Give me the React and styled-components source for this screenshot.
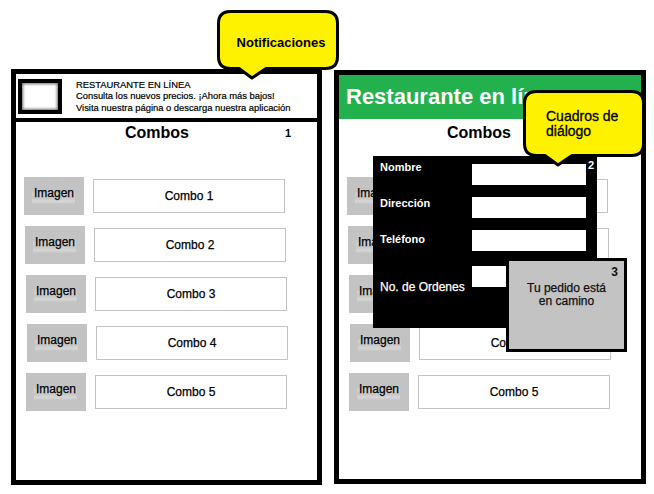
import React from "react"
import styled, { createGlobalStyle } from "styled-components"

const GlobalStyle = createGlobalStyle`
  body {
    margin: 0;
    background: #fff;
    font-family: "Liberation Sans", Arial, sans-serif;
  }
`

const Canvas = styled.div`
  position: relative;
  width: 654px;
  height: 494px;
  overflow: hidden;
  background: #fff;
`

const Screens = styled.div`
  display: flex;
  align-items: flex-start;
  gap: 12px;
  padding: 69px 0 0 11px;
`

const Phone = styled.div`
  position: relative;
  box-sizing: border-box;
  display: flex;
  flex-direction: column;
  width: ${(p) => p.$width}px;
  height: ${(p) => p.$height}px;
  margin-top: ${(p) => p.$offset || 0}px;
  border: 5px solid #000;
  background: #fff;
`

const NotifBar = styled.div`
  display: flex;
  align-items: center;
  gap: 14px;
  height: 44px;
  padding-left: 2px;
  border-bottom: 4px solid #000;
`

const Thumb = styled.div`
  box-sizing: border-box;
  width: 44px;
  height: 35px;
  border: 4px solid #000;
  background: #fff;
  box-shadow: inset 0 0 3px 1px #6a6a6a;
`

const NotifText = styled.div`
  font-size: 9.4px;
  line-height: 11.5px;
  color: #000;
  -webkit-text-stroke: 0.2px #000;
`

const GreenBar = styled.div`
  display: flex;
  align-items: center;
  height: 44px;
  padding-left: 7px;
  background: #22b14c;
  color: #fff;
  font-size: 22px;
  font-weight: bold;
  white-space: nowrap;
`

const Header = styled.div`
  position: relative;
  display: flex;
  justify-content: center;
  padding: ${(p) => p.$top || 0}px ${(p) => p.$pad}px 0 0;
  font-size: 16px;
  line-height: 22px;
  font-weight: bold;
`

const Marker = styled.span`
  position: absolute;
  top: 0;
  right: 26px;
  font-size: 11px;
  font-weight: bold;
`

const List = styled.div`
  display: flex;
  flex-direction: column;
  gap: 11px;
  padding: 33px 0 0 8px;
`

const Row = styled.div`
  display: flex;
  align-items: center;
  gap: 9px;
  height: 38px;
  margin-left: ${(p) => p.$nudge || 0}px;
`

const ImageBox = styled.div`
  display: flex;
  align-items: center;
  justify-content: center;
  width: 60px;
  height: 38px;
  padding-bottom: 6px;
  box-sizing: border-box;
  font-size: 12px;
  color: #000;
  -webkit-text-stroke: 0.25px #000;
  background:
    linear-gradient(180deg, transparent 0 38%, #d2d2d2 45%, #c6c6c6 55%, #d6d6d6 64%, transparent 72%) center / 72% 100% no-repeat,
    #c3c3c3;
`

const ComboBox = styled.div`
  box-sizing: border-box;
  display: flex;
  align-items: center;
  justify-content: center;
  width: 192px;
  height: 34px;
  border: 1px solid #c3c3c3;
  font-size: 12px;
  color: #000;
  -webkit-text-stroke: 0.25px #000;
`

const Dialog = styled.div`
  position: absolute;
  left: 34px;
  top: 81px;
  box-sizing: border-box;
  display: flex;
  flex-direction: column;
  gap: 12px;
  width: 224px;
  height: 172px;
  padding: 8px 0 0 7px;
  background: #000;
  color: #fff;
`

const Field = styled.div`
  display: flex;
  align-items: flex-start;
  height: 21px;
  margin-top: ${(p) => p.$gap || 0}px;
`

const Label = styled.span`
  width: 92px;
  margin-top: ${(p) => p.$drop}px;
  font-size: ${(p) => (p.$plain ? 12 : 11)}px;
  font-weight: ${(p) => (p.$plain ? "normal" : "bold")};
  -webkit-text-stroke: ${(p) => (p.$plain ? "0.25px #fff" : "0")};
  line-height: 14px;
  white-space: nowrap;
`

const Input = styled.div`
  width: 114px;
  height: 21px;
  background: #fff;
`

const DialogNum = styled.span`
  position: absolute;
  top: 3px;
  right: 3px;
  font-size: 11px;
  font-weight: bold;
`

const Toast = styled.div`
  position: absolute;
  left: 167px;
  top: 183px;
  box-sizing: border-box;
  width: 121px;
  height: 94px;
  border: 3px solid #000;
  background: #c3c3c3;
  color: #111;
  font-size: 12px;
  line-height: 13px;
`

const ToastNum = styled.div`
  margin-top: 5px;
  padding-right: 6px;
  text-align: right;
  font-weight: bold;
`

const ToastText = styled.div`
  margin-top: 3px;
  text-align: center;
  -webkit-text-stroke: 0.25px #111;
`

const Callout = styled.div`
  position: absolute;
  left: ${(p) => p.$x}px;
  top: ${(p) => p.$y}px;
  width: 122px;
  height: ${(p) => p.$h}px;
  box-sizing: border-box;
  padding: ${(p) => p.$pad};
  color: #000;
  font-size: ${(p) => p.$size}px;
  font-weight: ${(p) => (p.$bold ? "bold" : "normal")};
  -webkit-text-stroke: ${(p) => (p.$bold ? "0" : "0.3px #000")};
  line-height: 15px;
  text-align: ${(p) => (p.$bold ? "center" : "left")};
`

const Bubble = styled.svg`
  position: absolute;
  left: 0;
  top: 0;
  overflow: visible;
`

const CalloutText = styled.div`
  position: relative;
`

const bubblePath = (h) =>
  `M13.5,1.5 H108.5 Q120.5,1.5 120.5,13.5 V${h - 13.5} Q120.5,${h - 1.5} 108.5,${h - 1.5} H49 L35,${h + 8} L22,${h - 1.5} H13.5 Q1.5,${h - 1.5} 1.5,${h - 13.5} V13.5 Q1.5,1.5 13.5,1.5 Z`

const SpeechBubble = ({ x, y, h, size, bold, pad, children }) => (
  <Callout $x={x} $y={y} $h={h} $size={size} $bold={bold} $pad={pad}>
    <Bubble width="122" height={h + 10}>
      <path d={bubblePath(h)} fill="#fff200" stroke="#000" strokeWidth="3" strokeLinejoin="round" />
    </Bubble>
    <CalloutText>{children}</CalloutText>
  </Callout>
)

const combos = [1, 2, 3, 4, 5]
const nudges = [0, 1, 2, 3, 2]

const ComboList = () => (
  <List>
    {combos.map((n, i) => (
      <Row key={n} $nudge={nudges[i]}>
        <ImageBox>Imagen</ImageBox>
        <ComboBox>Combo {n}</ComboBox>
      </Row>
    ))}
  </List>
)

export default function App() {
  return (
    <Canvas>
      <GlobalStyle />
      <Screens>
        <Phone $width={311} $height={416}>
          <NotifBar>
            <Thumb />
            <NotifText>
              RESTAURANTE EN LÍNEA
              <br />
              Consulta los nuevos precios. ¡Ahora más bajos!
              <br />
              Visita nuestra página o descarga nuestra aplicación
            </NotifText>
          </NotifBar>
          <Header $pad={19}>
            Combos
            <Marker>1</Marker>
          </Header>
          <ComboList />
        </Phone>

        <Phone $width={312} $height={414} $offset={1}>
          <GreenBar>Restaurante en línea</GreenBar>
          <Header $pad={22} $top={3}>
            Combos
          </Header>
          <ComboList />
          <Dialog>
            <DialogNum>2</DialogNum>
            <Field>
              <Label $drop={-4}>Nombre</Label>
              <Input />
            </Field>
            <Field>
              <Label $drop={-1}>Dirección</Label>
              <Input />
            </Field>
            <Field>
              <Label $drop={2}>Teléfono</Label>
              <Input />
            </Field>
            <Field $gap={3}>
              <Label $drop={14} $plain>
                No. de Ordenes
              </Label>
              <Input />
            </Field>
          </Dialog>
          <Toast>
            <ToastNum>3</ToastNum>
            <ToastText>
              Tu pedido está
              <br />
              en camino
            </ToastText>
          </Toast>
        </Phone>
      </Screens>

      <SpeechBubble x={217} y={10} h={60} size={13} bold pad="25px 0 0 6px">
        Notificaciones
      </SpeechBubble>
      <SpeechBubble x={523} y={90} h={67} size={14} pad="19px 0 0 23px">
        Cuadros de
        <br />
        diálogo
      </SpeechBubble>
    </Canvas>
  )
}
